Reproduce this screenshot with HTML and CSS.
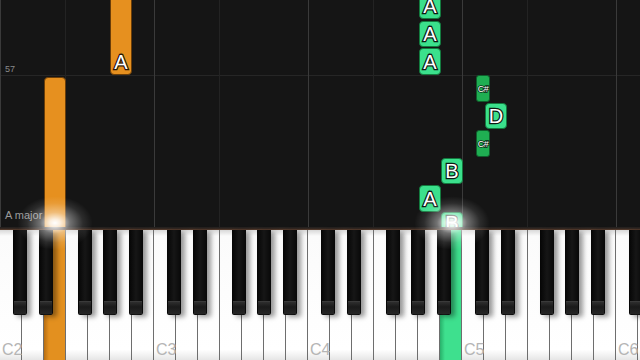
FILE: index.html
```html
<!DOCTYPE html>
<html lang="en">
<head>
<meta charset="UTF-8">
<meta name="viewport" content="width=device-width, initial-scale=1.0">
<title>Piano Roll</title>
<link rel="stylesheet" href="styles.css">
</head>
<body>

<div class="screen">

    <div class="roll" id="roll">
        <span class="bar-line"></span>
        <span class="bar-num">57</span>
        <span class="key-sig">A major</span>
    </div>

    <div class="rail"></div>

    <div class="keyboard" id="keyboard"></div>

    <div class="glow glow-orange"></div>
    <div class="glow glow-green"></div>

</div>

<script>
let roll = document.getElementById("roll");
let keyboard = document.getElementById("keyboard");

let whiteW = 22;
let blackOffsets = [13, 39, null, 78, 103, 129]; // after C, D, (E), F, G, A

// pressed keys: index of white key -> colour class
let pressed = { 2: "orange", 20: "green" };

// grid lines on C (bright) and F (dim)
for (let i = 0; i < 30; i++) {
    let note = i % 7;
    if (note === 0 || note === 3) {
        let line = document.createElement("span");
        line.className = note === 0 ? "grid grid-c" : "grid grid-f";
        line.style.left = (i * whiteW - (note === 0 ? 0 : 1)) + "px";
        roll.appendChild(line);
    }
}

// white keys
for (let i = 0; i < 30; i++) {
    let key = document.createElement("div");
    key.className = "white";
    if (pressed[i]) key.className += " " + pressed[i];
    if (i % 7 === 0) {
        let label = document.createElement("span");
        label.className = "key-label";
        label.innerText = "C" + (2 + i / 7);
        key.appendChild(label);
    }
    keyboard.appendChild(key);
}

// black keys
for (let oct = 0; oct < 5; oct++) {
    for (let j = 0; j < blackOffsets.length; j++) {
        if (blackOffsets[j] === null) continue;
        let left = oct * 154 + blackOffsets[j];
        if (left > 640) continue;
        let key = document.createElement("div");
        key.className = "black";
        key.style.left = left + "px";
        keyboard.appendChild(key);
    }
}

// falling notes: left, top, height, label, type
let notes = [
    [110, -6, 81, "A", "orange big"],
    [44, 77, 160, "", "orange"],
    [419, -5, 24, "A", "green big"],
    [419, 21, 26, "A", "green big"],
    [419, 48, 27, "A", "green big"],
    [476, 75, 27, "C#", "dark small"],
    [485, 103, 26, "D", "green big"],
    [476, 130, 27, "C#", "dark small"],
    [441, 158, 26, "B", "green big"],
    [419, 185, 27, "A", "green big"],
    [441, 212, 24, "B", "green big"]
];

for (let i = 0; i < notes.length; i++) {
    let n = notes[i];
    let el = document.createElement("div");
    el.className = "note " + n[4];
    el.style.left = n[0] + "px";
    el.style.top = n[1] + "px";
    el.style.height = n[2] + "px";
    if (n[3]) {
        let label = document.createElement("span");
        label.innerText = n[3];
        el.appendChild(label);
    }
    roll.appendChild(el);
}
</script>

</body>
</html>
```

FILE: styles.css
```css
body {
    margin: 0;
    background: #141414;
    font-family: 'Liberation Sans', Arial, sans-serif;
    overflow: hidden;
}

.screen {
    position: relative;
    width: 640px;
    height: 360px;
    overflow: hidden;
    display: flex;
    flex-direction: column;
}

.roll {
    position: relative;
    height: 227px;
    background: #151515;
    overflow: hidden;
}

.grid {
    position: absolute;
    top: 0;
    bottom: 0;
    width: 1px;
}

.grid-c {
    background: #3a3a3a;
}

.grid-f {
    background: #232323;
}

.bar-line {
    position: absolute;
    left: 0;
    right: 0;
    top: 75px;
    height: 1px;
    background: #262626;
}

.bar-num {
    position: absolute;
    left: 5px;
    top: 64px;
    font-size: 9px;
    color: #8a8a8a;
}

.key-sig {
    position: absolute;
    left: 5px;
    top: 209px;
    font-size: 11px;
    color: #9a9a9a;
}

.note {
    position: absolute;
    width: 22px;
    border-radius: 4px;
    box-sizing: border-box;
    display: flex;
    justify-content: center;
    align-items: flex-end;
}

.note span {
    color: #fff;
    paint-order: stroke fill;
}

.note.orange {
    background: #e6901f;
    border: 1px solid #6a3d08;
}

.note.green {
    background: #3be08c;
    border: 1px solid #137a3e;
}

.note.dark {
    width: 14px;
    background: #1fae52;
    border: 1px solid #0f5e2c;
    border-radius: 3px;
    align-items: center;
}

.note.big span {
    font-size: 20px;
    line-height: 18px;
    padding-bottom: 3px;
    -webkit-text-stroke: 2.5px #0c1a12;
}

.note.orange.big span {
    -webkit-text-stroke: 2.5px #2a1604;
}

.note.small span {
    font-size: 9px;
    line-height: 10px;
    letter-spacing: -0.5px;
    -webkit-text-stroke: 1.5px #0c2a16;
}

.rail {
    height: 3px;
    background: linear-gradient(#1e1e1e, #3a2a22 70%, #6b4a35);
}

.keyboard {
    position: relative;
    display: flex;
    height: 130px;
    background: #fff;
}

.white {
    position: relative;
    flex: 0 0 22px;
    box-sizing: border-box;
    border-right: 1px solid #6e6e6e;
    background: linear-gradient(#d8d8d8, #fbfbfb 6px, #ffffff 92%, #e6e6e6);
}

.white.orange {
    background: linear-gradient(90deg, #b86e12, #e3901f 5px, #e3901f);
}

.white.green {
    background: linear-gradient(90deg, #28b06a, #3ee08e 5px, #3ee08e);
}

.key-label {
    position: absolute;
    left: 2px;
    bottom: 1px;
    font-size: 16px;
    color: #b5b5b5;
}

.black {
    position: absolute;
    top: 0;
    width: 14px;
    height: 85px;
    background: linear-gradient(90deg, #050505, #161616 50%, #080808);
    border-radius: 0 0 2px 2px;
    box-shadow: 4px 2px 5px rgba(0,0,0,0.4);
}

.black::after {
    content: "";
    position: absolute;
    left: 1px;
    right: 1px;
    bottom: 1px;
    height: 12px;
    background: linear-gradient(#2e2e2e, #1a1a1a 40%, #262626);
    border-top: 1px solid #3a3a3a;
}

.glow {
    position: absolute;
    width: 76px;
    height: 54px;
    top: 196px;
    border-radius: 50%;
    background: radial-gradient(ellipse at center, #fff 0, rgba(255,255,255,0.85) 10%, rgba(255,255,255,0.4) 28%, rgba(255,255,255,0.1) 52%, rgba(255,255,255,0) 70%);
}

.glow-orange {
    left: 17px;
}

.glow-green {
    left: 414px;
}
```
